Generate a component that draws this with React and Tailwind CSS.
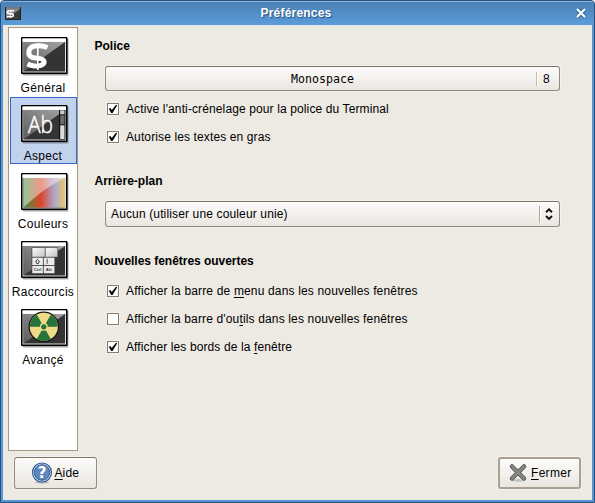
import React from "react";

function Frame({ children, white = true }) {
  return (
    <svg width="48" height="39" viewBox="0 0 48 39" className="block shrink-0">
      <defs>
        <linearGradient id="dark" x1="0" y1="1" x2="1" y2="0">
          <stop offset="0" stopColor="#5c5c5c" />
          <stop offset="1" stopColor="#a4a4a4" />
        </linearGradient>
        <linearGradient id="rainbow" x1="0" x2="1">
          <stop offset="0" stopColor="#3f9440" />
          <stop offset=".42" stopColor="#e04428" />
          <stop offset=".74" stopColor="#aaa6cc" />
          <stop offset="1" stopColor="#e8c870" />
        </linearGradient>
        <linearGradient id="key" x1="0" x2="1" y1="0" y2="1">
          <stop offset="0" stopColor="#fafafa" />
          <stop offset="1" stopColor="#c4c4c4" />
        </linearGradient>
      </defs>
      <rect x="1.5" y="1.5" width="46" height="37" rx="1" fill="#000" opacity=".35" />
      <rect x="0" y="0" width="46.5" height="37" rx="1" fill="#000" />
      <rect x="1.5" y="1.5" width="43.5" height="34" fill="#dcdcdc" />
      <rect x="1.5" y="1.5" width="43.5" height="3.3" fill="#fff" />
      <rect x="2.5" y="5" width="41.5" height="29.5" fill="#343434" />
      {white && <path d="M2.5 5H44L2.5 34.5Z" fill="url(#dark)" />}
      {children}
    </svg>
  );
}

const ICONS = {
  general: (
    <Frame>
      <path d="M26.5 10.5C23 9 18 8.5 14 9C7 10 6 18 11 20.3C14 21.6 22 20.6 23 24C24 28.5 17 29.5 12 28.7C9.5 28.3 8 27.7 6.5 27" fill="none" stroke="#fff" strokeWidth="5" />
      <path d="M16.8 6V33" stroke="#fff" strokeWidth="1.6" />
    </Frame>
  ),
  look: (
    <Frame>
      <text x="7" y="28" fontSize="23.5" fill="#fff" stroke="#fff" strokeWidth=".5" textLength="25" lengthAdjust="spacingAndGlyphs" fontFamily="Open Sans" fontWeight="300">Ab</text>
      <rect x="38" y="5" width="6.5" height="29.5" fill="#111" />
      <rect x="39.2" y="5.3" width="4.3" height="4" fill="#ccc" />
      <rect x="39.2" y="10.3" width="4.3" height="9" fill="#6c6c6c" />
      <rect x="39.2" y="20.3" width="4.3" height="13.7" fill="#dcdcdc" />
    </Frame>
  ),
  colors: (
    <Frame white={false}>
      <rect x="2.5" y="5" width="41.5" height="29.5" fill="url(#rainbow)" />
      <path d="M2.5 5H44Q24 14 2.5 34.5Z" fill="#fff" opacity=".45" />
    </Frame>
  ),
  keys: (
    <Frame>
      <path d="M10.5 6.5H37V16.5H34V32.5H10.5Z" fill="#444" />
      <rect x="11.3" y="7" width="12.5" height="8.8" fill="url(#key)" />
      <rect x="24.6" y="7" width="11.8" height="8.8" fill="url(#key)" />
      <g fill="#ececec">
        <rect x="11.3" y="16.7" width="10.6" height="7.3" />
        <rect x="22.8" y="16.7" width="10.6" height="7.3" />
        <rect x="11.3" y="24.9" width="10.6" height="7.3" />
        <rect x="22.8" y="24.9" width="10.6" height="7.3" />
      </g>
      <path d="M14.5 20.6L16.5 18.2L18.5 20.6H17.6V22.6H15.4V20.6Z M25.5 18L27 19.2L25.5 20.4L27 21.6L25.5 22.8" fill="none" stroke="#444" strokeWidth=".9" />
      <g fontSize="4.4" fontWeight="bold" fill="#333" fontFamily="Liberation Sans">
        <text x="12.8" y="30.2">Ctrl</text>
        <text x="24.8" y="30.2">Alt</text>
      </g>
    </Frame>
  ),
  advanced: (
    <Frame>
      <circle cx="22.8" cy="17.8" r="14.7" fill="#f0dc86" stroke="#171717" strokeWidth="1.3" />
      <g fill="#26733b" transform="rotate(180 22.8 17.8)">
        <path d="M22.8 17.8L15.8 5.7A14 14 0 0 1 29.8 5.7Z" />
        <path d="M22.8 17.8L15.8 5.7A14 14 0 0 1 29.8 5.7Z" transform="rotate(120 22.8 17.8)" />
        <path d="M22.8 17.8L15.8 5.7A14 14 0 0 1 29.8 5.7Z" transform="rotate(240 22.8 17.8)" />
        <circle cx="22.8" cy="17.8" r="3.3" stroke="#f0dc86" strokeWidth="1.3" />
      </g>
    </Frame>
  ),
};

const PAGES = [
  { id: "general", label: "Général" },
  { id: "look", label: "Aspect" },
  { id: "colors", label: "Couleurs" },
  { id: "keys", label: "Raccourcis" },
  { id: "advanced", label: "Avançé" },
];

function SideItem({ page, selected }) {
  return (
    <div className={"mb-px flex h-[67px] flex-col items-center border pt-[7px] " + (selected ? "border-[#316ac5] bg-[#c1d2ee]" : "border-transparent")}>
      <div className="ml-[2px] h-[39px] w-12">{ICONS[page.id]}</div>
      <div className="mt-[4px] h-4 pr-px leading-4 tracking-[0.3px]">{page.label}</div>
    </div>
  );
}

function Check({ checked, children, cls }) {
  return (
    <div className="ml-[12px] flex h-7 items-center">
      <span className="mr-[7px] block h-[12px] w-[12px] border border-[#857b6c] bg-white shadow-[0_0_0_1px_#f4f2ee]">
        {checked && (
          <svg width="10" height="10" viewBox="0 0 10 10" className="block">
            <path d="M0.8 4.7L2.4 4L3.8 6L8 0.8L9.2 1.3L4.6 9H3.2Z" fill="#000" />
          </svg>
        )}
      </span>
      <span className={"whitespace-pre leading-4 " + cls}>{children}</span>
    </div>
  );
}

const U = ({ children }) => <span className="underline decoration-1 underline-offset-2">{children}</span>;

const BUTTON = "flex items-center rounded-[3px] bg-linear-to-b from-[#fcfcfa] via-[#f3f1ee] to-[#eae6e0] shadow-[0_0_0_1px_#f3f1ed]";
const THIN = " border border-[#94897a] border-t-[#7f7566]";

export default function App() {
  return (
    <div className="flex h-[503px] w-[595px] cursor-default flex-col overflow-hidden rounded-t-[4px] border border-[#29507a] bg-[#5596d7] font-['Liberation_Sans',Arial,sans-serif] text-[12px] text-black">
      <header className="flex h-[24px] shrink-0 items-center border-t border-[#89b5df] bg-linear-to-b from-[#4b80b5] to-[#5a9cdb] pl-[4px] pr-[7px]">
        <svg width="16" height="13" viewBox="0 0 16 13">
          <rect width="16" height="13" fill="#222" />
          <rect x="1" y="1.5" width="14" height="10.5" fill="#3a3a3a" />
          <path d="M1 2H15L1 12Z" fill="#888" />
          <path d="M1 1H15" stroke="#ccc" />
          <path d="M9 3.8H4.5Q2.5 3.8 2.5 5.2T4.5 6.7H6.5Q8.3 6.7 8.3 8.2T6.5 9.7H2" fill="none" stroke="#fff" strokeWidth="1.6" />
          <path d="M5.6 2.5V11" stroke="#fff" strokeWidth=".7" />
        </svg>
        <h1 className="-mt-[2px] flex-1 pr-[4px] text-center text-[12px] font-bold leading-4 tracking-[0.2px] text-white [text-shadow:1px_1px_1px_#274f7c]">Préférences</h1>
        <svg width="12" height="12" viewBox="0 0 12 12" className="-mt-px">
          <path d="M2.5 2.5L10 10M10 2.5L2.5 10" stroke="#2b5585" strokeWidth="4" opacity=".5" />
          <path d="M2 2L10 10M10 2L2 10" stroke="#fff" strokeWidth="2" />
        </svg>
      </header>

      <main className="mx-[2px] mb-[2px] flex flex-1 flex-col bg-[#ede9e3]">
        <div className="flex h-[426px] pl-[5px] pt-[2px]">
          <nav className="h-[424px] w-[70px] shrink-0 border border-[#a69a85] bg-white pl-px pt-px">
            {PAGES.map((p) => (
              <SideItem key={p.id} page={p} selected={p.id === "look"} />
            ))}
          </nav>

          <section className="ml-[17px] w-[465px]">
            <h2 className="-ml-[0.5px] mt-[11px] h-4 font-bold leading-4">Police</h2>
            <div className={BUTTON + THIN + " ml-[10px] mt-[12px] h-[25px] w-[455px]"}>
              <span className="mt-[2px] flex-1 pl-[3px] text-center font-['DejaVu_Sans_Mono',monospace] text-[11.6px]">Monospace</span>
              <span className="h-[14px] w-[2px] border-l border-r border-l-[#c5baa9] border-r-white" />
              <span className="w-[21px] pl-[5px] text-[12px]">8</span>
            </div>
            <div className="mt-[4px]">
              <Check checked cls="tracking-[0.12px]">Active l'anti-crénelage pour la police du Terminal</Check>
              <Check checked cls="tracking-[0.12px]">Autorise les textes en gras</Check>
            </div>

            <h2 className="-ml-[0.5px] mt-[22px] h-4 font-bold leading-4">Arrière-plan</h2>
            <div className={BUTTON + THIN + " ml-[10px] mt-[12px] h-[26px] w-[455px] pl-[5px]"}>
              <span className="flex-1 tracking-[0.14px]">Aucun (utiliser une couleur unie)</span>
              <span className="h-[17px] w-[2px] border-l border-r border-l-[#b0a696] border-r-white" />
              <svg width="18" height="14" viewBox="0 0 18 14">
                <path d="M5 5.2L8 2.3L11 5.2M5 9L8 11.9L11 9" fill="none" stroke="#111" strokeWidth="2" />
              </svg>
            </div>

            <h2 className="-ml-[0.5px] mt-[26px] h-4 font-bold leading-4 tracking-[-0.03px]">Nouvelles fenêtres ouvertes</h2>
            <div className="mt-[8px]">
              <Check checked cls="tracking-[0.16px]">Afficher la barre de <U>m</U>enu dans les nouvelles fenêtres</Check>
              <Check cls="tracking-[0.15px]">Afficher la barre d'ou<U>t</U>ils dans les nouvelles fenêtres</Check>
              <Check checked cls="tracking-[0.11px]">Afficher les bords de la <U>f</U>enêtre</Check>
            </div>
          </section>
        </div>

        <footer className="mt-[6px] flex justify-between pl-[11px] pr-[11px]">
          <button className={BUTTON + THIN + " h-[32px] w-[83px] pl-[16px]"}>
            <svg width="22" height="22" viewBox="0 0 22 22">
              <ellipse cx="11" cy="20.3" rx="7" ry="1.5" fill="#999" opacity=".6" />
              <circle cx="11" cy="10.5" r="9.5" fill="#e8eef7" stroke="#315d99" strokeWidth="1.2" />
              <circle cx="11" cy="10.5" r="7.8" fill="#5f87bd" stroke="#315d99" />
              <text x="11" y="16" textAnchor="middle" fontSize="15" fontWeight="bold" fill="#fff" fontFamily="DejaVu Sans">?</text>
            </svg>
            <span className="ml-[1.5px] tracking-[0.1px]"><U>A</U>ide</span>
          </button>
          <button className={BUTTON + " h-[32px] w-[83px] border-2 border-[#aa9f90] pl-[8px]"}>
            <svg width="20" height="20" viewBox="0 0 20 20">
              <ellipse cx="10" cy="17.5" rx="6" ry="1.5" fill="#aaa" opacity=".6" />
              <path d="M4 3.5L16 15.5M16 3.5L4 15.5" stroke="#565752" strokeWidth="4.5" strokeLinecap="round" />
              <path d="M4 3.5L16 15.5M16 3.5L4 15.5" stroke="#858782" strokeWidth="2.7" strokeLinecap="round" />
            </svg>
            <span className="ml-[3px] tracking-[0.3px]"><U>F</U>ermer</span>
          </button>
        </footer>
      </main>
    </div>
  );
}
